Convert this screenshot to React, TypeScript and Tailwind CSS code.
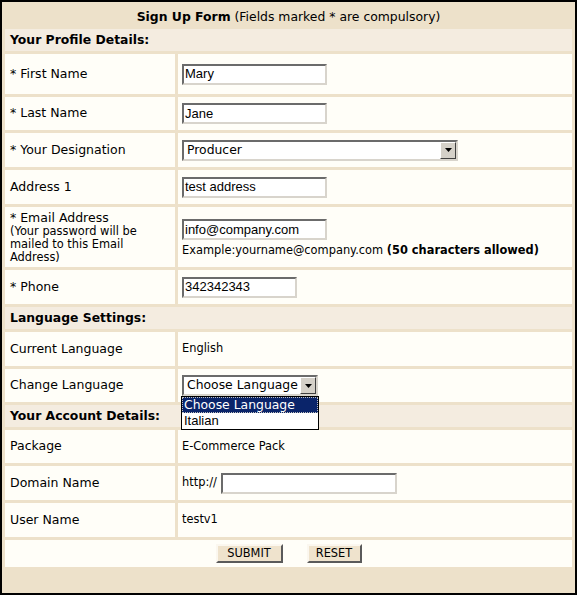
import React from "react";

const verdana = "font-['DejaVu_Sans','Verdana',sans-serif]";
const arial = "font-['Liberation_Sans','Arial',sans-serif]";

function TextBox({ value, width }: { value: string; width: string }) {
  return (
    <div
      className={`${width} h-[21px] bg-white border-2 border-t-[#6b6b6b] border-l-[#6b6b6b] border-b-[#d8d4cc] border-r-[#d8d4cc] flex items-center px-[1px] text-[13px] text-black ${arial}`}
    >
      {value}
    </div>
  );
}

function ArrowButton() {
  return (
    <div className="w-[16px] h-[17px] bg-[#d4d0c8] border border-t-white border-l-white border-b-[#404040] border-r-[#404040] flex items-center justify-center">
      <svg width="7" height="4" viewBox="0 0 7 4">
        <path d="M0 0H7L3.5 4Z" fill="#000" />
      </svg>
    </div>
  );
}

function Select({ value, width }: { value: string; width: string }) {
  return (
    <div
      className={`${width} h-[21px] bg-white border-2 border-t-[#6b6b6b] border-l-[#6b6b6b] border-b-[#d8d4cc] border-r-[#d8d4cc] flex items-center justify-between pl-[3px] text-[12.4px] text-black ${verdana}`}
    >
      <span className="leading-none whitespace-nowrap">{value}</span>
      <ArrowButton />
    </div>
  );
}

function Row({
  label,
  children,
  h = "h-[34px]",
}: {
  label: React.ReactNode;
  children?: React.ReactNode;
  h?: string;
}) {
  return (
    <div className={`grid grid-cols-[170px_1fr] gap-[3px] ${h}`}>
      <div className="bg-[#fffef8] flex items-center pl-[5px] text-[12.5px] text-black">
        {label}
      </div>
      <div className="bg-[#fffef8] flex items-center pl-[4px] text-[11.4px] text-black">
        {children}
      </div>
    </div>
  );
}

function Section({ title }: { title: string }) {
  return (
    <div className="h-[22px] bg-[#f4ece0] flex items-center pl-[5px] pt-[1px] text-[12.4px] font-bold text-black">
      {title}
    </div>
  );
}

function Button({ label, width }: { label: string; width: string }) {
  return (
    <div
      className={`${width} h-[19px] bg-[#efe3cd] border-2 border-t-[#fbf7ef] border-l-[#fbf7ef] border-b-[#5a5a5a] border-r-[#5a5a5a] flex items-center justify-center text-[11.4px] text-black`}
    >
      {label}
    </div>
  );
}

export default function App() {
  return (
    <div className={`w-[577px] h-[595px] border-2 border-black bg-[#ede1ca] flex flex-col ${verdana}`}>
      <div className="h-[27px] flex items-center justify-center text-[12.4px] text-black pt-[4px]">
        <span className="font-bold">Sign Up Form</span>
        <span>&nbsp;(Fields marked * are compulsory)</span>
      </div>

      <div className="flex flex-col gap-[3px] px-[3px]">
        <Section title="Your Profile Details:" />
        <Row label="* First Name" h="h-[40px]">
          <TextBox value="Mary" width="w-[145px]" />
        </Row>
        <Row label="* Last Name" h="h-[33px]">
          <TextBox value="Jane" width="w-[145px]" />
        </Row>
        <Row label="* Your Designation">
          <Select value="Producer" width="w-[276px]" />
        </Row>
        <Row label="Address 1">
          <TextBox value="test address" width="w-[145px]" />
        </Row>
        <Row
          h="h-[60px]"
          label={
            <div className="flex flex-col">
              <span className="leading-[14px]">* Email Address</span>
              <span className="text-[11.4px] leading-[13px]">
                (Your password will be
                <br />
                mailed to this Email
                <br />
                Address)
              </span>
            </div>
          }
        >
          <div className="flex flex-col gap-[3px] pt-[2px]">
            <TextBox value="info@company.com" width="w-[145px]" />
            <div className="leading-[14px] whitespace-nowrap">
              Example:yourname@company.com <span className="font-bold">(50 characters allowed)</span>
            </div>
          </div>
        </Row>
        <Row label="* Phone">
          <TextBox value="342342343" width="w-[115px]" />
        </Row>

        <Section title="Language Settings:" />
        <Row label="Current Language">English</Row>
        <Row label="Change Language" h="h-[33px]">
          <div className="relative">
            <Select value="Choose Language" width="w-[136px]" />
            <div className="absolute left-[-1px] top-[21px] w-[138px] h-[34px] bg-white border border-black flex flex-col text-[12.4px] z-10">
              <div className="h-[16px] bg-[#0a246a] text-white flex items-center pl-[2px] whitespace-nowrap outline outline-1 outline-dotted outline-[#c0c0c0] outline-offset-[-1px]">
                Choose Language
              </div>
              <div className={`h-[16px] flex items-center pl-[2px] text-black text-[13px] ${arial}`}>
                Italian
              </div>
            </div>
          </div>
        </Row>

        <Section title="Your Account Details:" />
        <Row label="Package" h="h-[33px]">E-Commerce Pack</Row>
        <Row label="Domain Name">
          <span className="mr-[4px]">http://</span>
          <TextBox value="" width="w-[176px]" />
        </Row>
        <Row label="User Name">testv1</Row>

        <div className="h-[27px] bg-[#fffef8] flex items-center justify-center gap-[24px]">
          <Button label="SUBMIT" width="w-[67px]" />
          <Button label="RESET" width="w-[55px]" />
        </div>
      </div>
    </div>
  );
}
